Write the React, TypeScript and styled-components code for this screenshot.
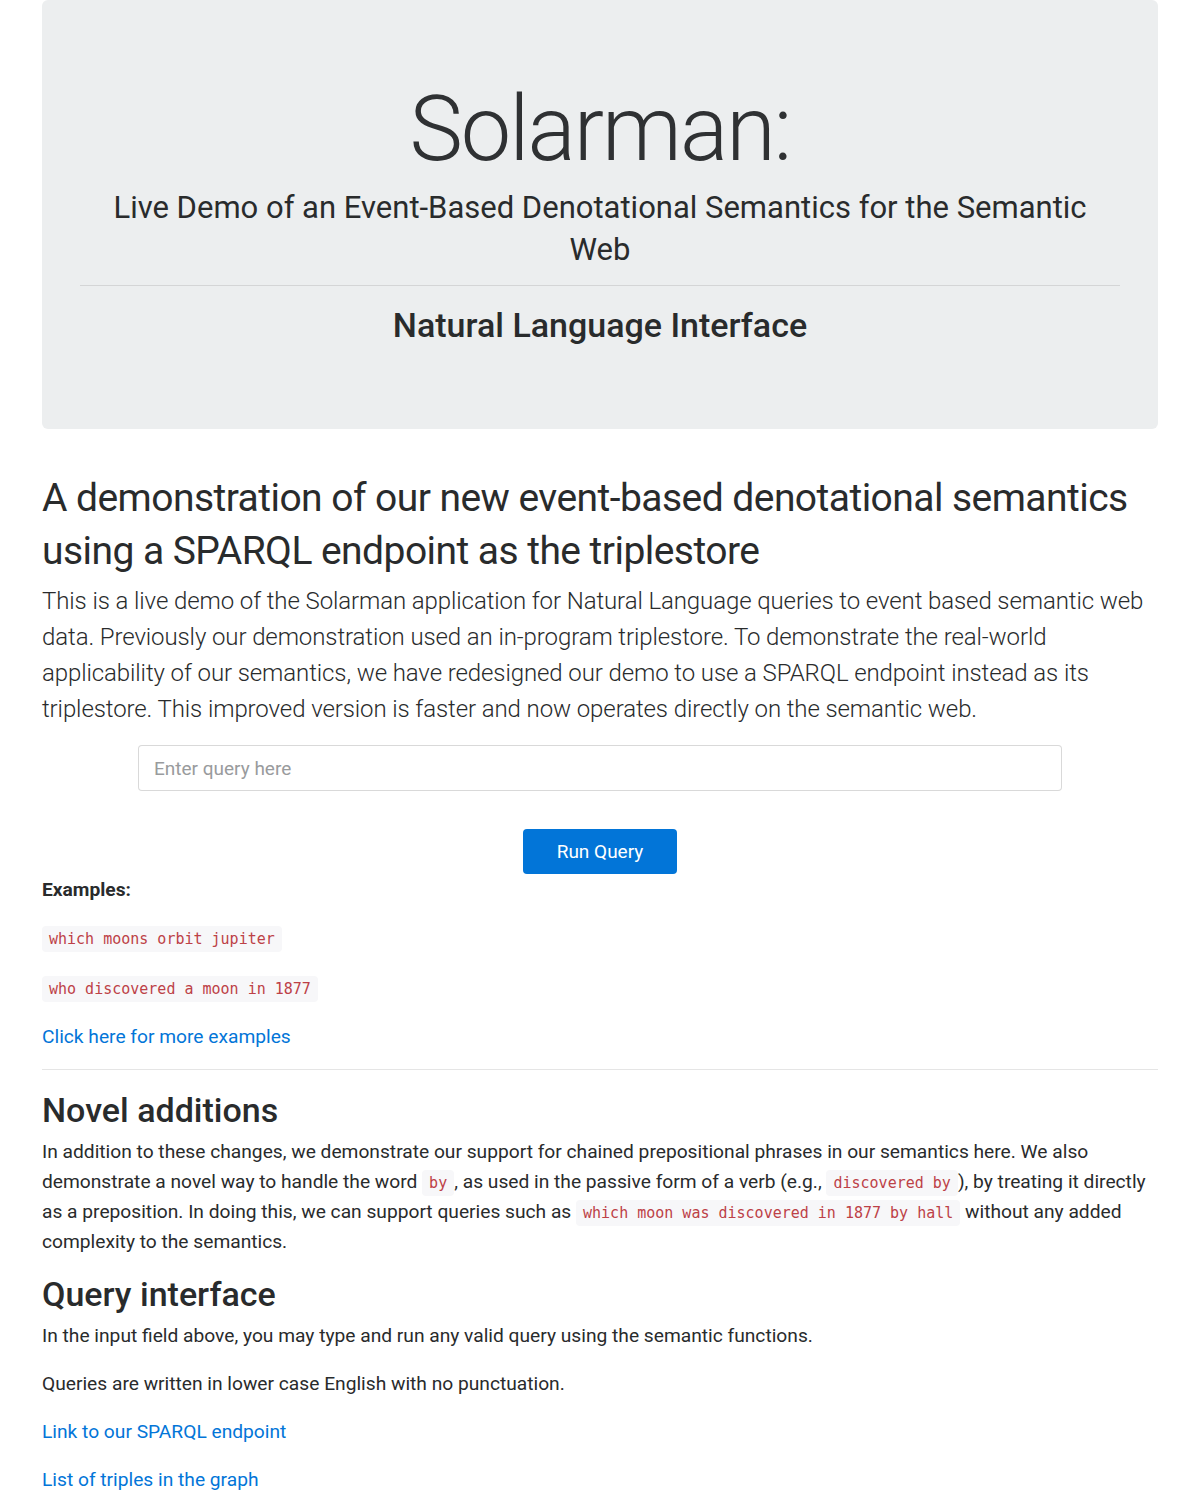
import React from "react";
import styled, { createGlobalStyle } from "styled-components";

const Global = createGlobalStyle`
  html, body { margin: 0; padding: 0; background: #fff; }
  body {
    font-family: Roboto, "Noto Sans", "Liberation Sans", sans-serif;
    color: #292b2c;
    font-size: 19.2px;
    line-height: 30px;
  }
  * { box-sizing: border-box; }
`;

const Page = styled.div`
  padding: 0 42px 20px;
`;

const Jumbotron = styled.header`
  background: #eceeef;
  border-radius: 6px;
  padding: 72px 38px 85px;
  text-align: center;
`;

const Title = styled.h1`
  margin: 0;
  font-size: 90px;
  letter-spacing: -2px;
  font-weight: 300;
  line-height: 115px;
  color: #2f3133;
`;

const Subtitle = styled.p`
  margin: 0;
  font-size: 31px;
  line-height: 42px;
  font-weight: 400;
`;

const Rule = styled.hr<{ $gapTop: number; $gapBottom: number }>`
  border: 0;
  border-top: 1px solid rgba(0, 0, 0, 0.1);
  margin: ${(p) => p.$gapTop}px 0 ${(p) => p.$gapBottom}px;
`;

const JumboHeading = styled.h2`
  margin: 0;
  font-size: 34px;
  line-height: 38px;
  font-weight: 500;
`;

const MainHeading = styled.h1`
  margin: 43px 0 5px;
  font-size: 39px;
  letter-spacing: -0.55px;
  line-height: 53px;
  font-weight: 400;
`;

const Lead = styled.p`
  margin: 0 0 18px;
  font-size: 24px;
  letter-spacing: -0.1px;
  line-height: 36px;
  font-weight: 300;
`;

const Form = styled.form`
  display: flex;
  flex-direction: column;
  align-items: center;
  gap: 38px;
`;

const Input = styled.input`
  width: 924px;
  height: 46px;
  border: 1px solid rgba(0, 0, 0, 0.15);
  border-radius: 4px;
  padding: 0 15px;
  font-family: inherit;
  font-size: 19px;
  color: #464a4c;
  &::placeholder { color: #999b9d; }
`;

const Button = styled.button`
  width: 154px;
  height: 45px;
  border: 0;
  border-radius: 4px;
  background: #0275d8;
  color: #fff;
  font-family: inherit;
  font-size: 19px;
  cursor: pointer;
`;

const Para = styled.p<{ $top?: number; $bottom?: number }>`
  margin: ${(p) => p.$top ?? 0}px 0 ${(p) => p.$bottom ?? 18}px;
  font-size: 19.2px;
  line-height: 30px;
`;

const Strong = styled.strong`
  font-weight: 700;
`;

const Code = styled.code`
  font-family: "DejaVu Sans Mono", "Liberation Mono", monospace;
  font-size: 15px;
  line-height: 1;
  color: #bd4147;
  background: #f7f7f9;
  border-radius: 4px;
  padding: 4px 7px;
`;

const Link = styled.a`
  color: #0275d8;
  text-decoration: none;
`;

const SectionHeading = styled.h2`
  margin: 0 0 8px;
  font-size: 34px;
  line-height: 38px;
  font-weight: 500;
`;

export default function App() {
  return (
    <>
      <Global />
      <Page>
        <Jumbotron>
          <Title>Solarman:</Title>
          <Subtitle>
            Live Demo of an Event-Based Denotational Semantics for the Semantic Web
          </Subtitle>
          <Rule $gapTop={14} $gapBottom={20} />
          <JumboHeading>Natural Language Interface</JumboHeading>
        </Jumbotron>

        <MainHeading>
          A demonstration of our new event-based denotational semantics using a
          SPARQL endpoint as the triplestore
        </MainHeading>
        <Lead>
          This is a live demo of the Solarman application for Natural Language
          queries to event based semantic web data. Previously our demonstration
          used an in-program triplestore. To demonstrate the real-world
          applicability of our semantics, we have redesigned our demo to use a
          SPARQL endpoint instead as its triplestore. This improved version is
          faster and now operates directly on the semantic web.
        </Lead>

        <Form onSubmit={(e) => e.preventDefault()}>
          <Input type="text" placeholder="Enter query here" />
          <Button type="submit">Run Query</Button>
        </Form>

        <Para $top={1}>
          <Strong>Examples:</Strong>
        </Para>
        <Para $bottom={20}>
          <Code>which moons orbit jupiter</Code>
        </Para>
        <Para $bottom={19}>
          <Code>who discovered a moon in 1877</Code>
        </Para>
        <Para $bottom={17}>
          <Link href="#">Click here for more examples</Link>
        </Para>

        <Rule $gapTop={0} $gapBottom={21} />

        <SectionHeading>Novel additions</SectionHeading>
        <Para>
          In addition to these changes, we demonstrate our support for chained
          prepositional phrases in our semantics here. We also demonstrate a
          novel way to handle the word <Code>by</Code>, as used in the passive
          form of a verb (e.g., <Code>discovered by</Code>), by treating it
          directly as a preposition. In doing this, we can support queries such
          as <Code>which moon was discovered in 1877 by hall</Code> without any
          added complexity to the semantics.
        </Para>

        <SectionHeading>Query interface</SectionHeading>
        <Para>
          In the input field above, you may type and run any valid query using
          the semantic functions.
        </Para>
        <Para>Queries are written in lower case English with no punctuation.</Para>
        <Para>
          <Link href="#">Link to our SPARQL endpoint</Link>
        </Para>
        <Para>
          <Link href="#">List of triples in the graph</Link>
        </Para>
      </Page>
    </>
  );
}
